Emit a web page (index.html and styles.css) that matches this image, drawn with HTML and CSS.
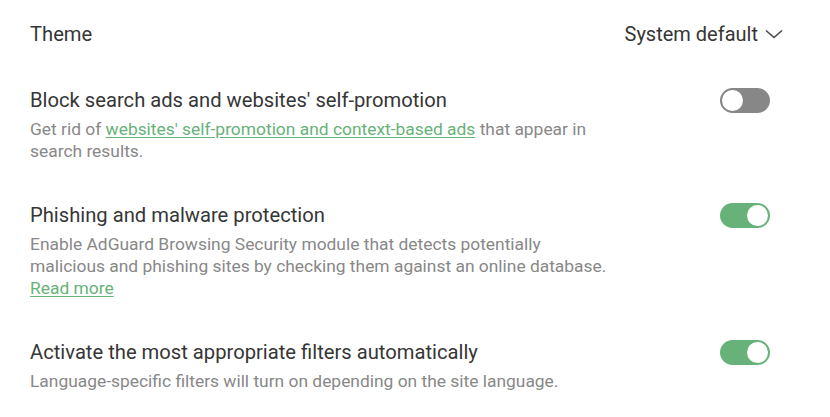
FILE: index.html
```html
<!DOCTYPE html>
<html lang="en">
<head>
    <meta charset="UTF-8">
    <meta name="viewport" content="width=device-width, initial-scale=1.0">
    <title>Settings</title>
    <link rel="stylesheet" href="styles.css">
</head>
<body>
    <main class="settings">
        <div class="row row-theme">
            <div class="title">Theme</div>
            <div class="select">
                System default
                <svg class="chevron" width="18" height="10" viewBox="0 0 18 10">
                    <path d="M1 1.5 L9 8.5 L17 1.5" fill="none" stroke="#4a4a4a" stroke-width="1.6"/>
                </svg>
            </div>
        </div>

        <div class="row">
            <div class="text">
                <div class="title">Block search ads and websites' self-promotion</div>
                <div class="desc">Get rid of <a href="#">websites' self-promotion and context-based ads</a> that appear in search results.</div>
            </div>
            <div class="toggle"></div>
        </div>

        <div class="row">
            <div class="text">
                <div class="title">Phishing and malware protection</div>
                <div class="desc">Enable AdGuard Browsing Security module that detects potentially malicious and phishing sites by checking them against an online database.<br><a href="#">Read more</a></div>
            </div>
            <div class="toggle on"></div>
        </div>

        <div class="row">
            <div class="text">
                <div class="title">Activate the most appropriate filters automatically</div>
                <div class="desc">Language-specific filters will turn on depending on the site language.</div>
            </div>
            <div class="toggle on"></div>
        </div>
    </main>
</body>
</html>
```

FILE: styles.css
```css
body {
    font-family: Roboto, 'Liberation Sans', sans-serif;
    margin: 0;
    padding: 0;
    background-color: #fff;
    color: #333;
}

.settings {
    padding: 1px 60px 0 30px;
}

.row {
    display: flex;
    justify-content: space-between;
    align-items: flex-start;
    padding: 20px 0;
}

.title {
    font-size: 20.2px;
    line-height: 26px;
    color: #363636;
}

.text {
    max-width: 582px;
}

.desc {
    margin-top: 5px;
    font-size: 17.4px;
    line-height: 22px;
    color: #888;
}

.desc a {
    color: #67b279;
    text-decoration: underline;
    text-underline-offset: 2px;
}

.select {
    display: flex;
    align-items: center;
    gap: 7px;
    font-size: 20px;
    line-height: 26px;
    color: #363636;
    margin-right: -13px;
}

.toggle {
    position: relative;
    flex-shrink: 0;
    width: 50px;
    height: 25px;
    margin-top: 1px;
    border-radius: 13px;
    background-color: #878787;
}

.toggle::after {
    content: '';
    position: absolute;
    top: 2px;
    left: 2px;
    width: 21px;
    height: 21px;
    border-radius: 50%;
    background-color: #fff;
}

.toggle.on {
    background-color: #67b279;
}

.toggle.on::after {
    left: 27px;
}
```
